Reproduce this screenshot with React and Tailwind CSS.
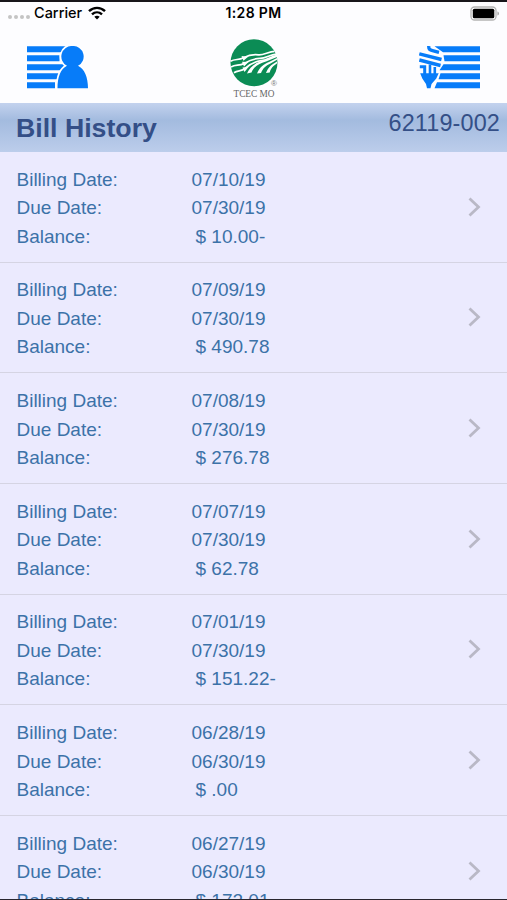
const bills = [
  { date: '07/10/19', due: '07/30/19', balance: '$ 10.00-' },
  { date: '07/09/19', due: '07/30/19', balance: '$ 490.78' },
  { date: '07/08/19', due: '07/30/19', balance: '$ 276.78' },
  { date: '07/07/19', due: '07/30/19', balance: '$ 62.78' },
  { date: '07/01/19', due: '07/30/19', balance: '$ 151.22-' },
  { date: '06/28/19', due: '06/30/19', balance: '$ .00' },
  { date: '06/27/19', due: '06/30/19', balance: '$ 172.01' },
];

function WifiIcon() {
  return (
    <svg width="18" height="14" viewBox="0 0 18 14" fill="none" stroke="#000" strokeWidth="2.4">
      <path d="M1 5.2C5.6.7 12.4.7 17 5.2" />
      <path d="M4 8.4c2.9-2.7 7.1-2.7 10 0" />
      <path d="M9 13.5 6.3 10.8c1.6-1.4 3.8-1.4 5.4 0z" fill="#000" stroke="none" />
    </svg>
  );
}

function StatusBar() {
  return (
    <div className="flex h-6 items-center border-t-2 border-[#18161a] px-2 text-black">
      <div className="flex flex-1 items-center">
        <div className="flex gap-[2px] pt-[7px]">
          {[0, 1, 2, 3].map((dot) => (
            <span key={dot} className="size-[4px] rounded-full bg-[#c4c4c4]" />
          ))}
        </div>
        <span className="ml-[4px] mr-[6px] font-[Inter] text-[14.5px] font-medium">Carrier</span>
        <WifiIcon />
      </div>
      <span className="-mt-px font-[Inter] text-[14px] font-semibold tracking-[0.35px]">1:28 PM</span>
      <div className="flex flex-1 items-center justify-end">
        <svg width="29" height="15" viewBox="0 0 29 15">
          <rect x="1" y="1" width="25" height="13" rx="3.500" fill="#fff" stroke="#b4b4b4" strokeWidth="1.300" />
          <rect x="2.800" y="2.700" width="21.500" height="9.600" rx="1.600" fill="#000" />
          <path d="M27.500 5.400c1.800.5 1.800 3.700 0 4.200z" fill="#999" />
        </svg>
      </div>
    </div>
  );
}

function AccountIcon() {
  return (
    <svg width="62" height="43" viewBox="0 0 62 43" fill="#077cf9">
      <path d="M0 .3h40v6H0zM0 9.300h32.500v6H0zM0 18.300h38v6H0zM0 27.300h32v6H0zM0 36.300h28v6H0z" />
      <path
        d="M45.500 0a10.500 10.500 0 0 1 5.500 19.800C57.500 23 61 31 61 42.300H30.500c0-11.300 3-19.300 9.500-22.500A10.500 10.500 0 0 1 45.500 0z"
        stroke="#fff"
        strokeWidth="3.400"
        paintOrder="stroke"
      />
    </svg>
  );
}

function UsageIcon() {
  return (
    <svg width="62" height="43" viewBox="0 0 62 43" fill="#077cf9">
      <path d="M15.500.3H61v6H24zM24.500 9.300H61v6H25.500zM24.500 18.300H61v6H20.500zM21.500 27.300H61v6H19.500zM18 36.300h43v6H15.500z" />
      <g fill="none" stroke="#077cf9" strokeWidth="3.400">
        <path d="M9.800 0c-.3 3 .8 4 3.700 4.700l6.500 1.700" />
        <path d="M.3 7.800 22.500 13.500" />
        <path d="M.3 14 21.500 19.500" />
        <path d="M.8 20.800h4.900V29" strokeWidth="3" />
        <path d="M11 18.500V29M15.800 21V29" strokeWidth="2.600" />
      </g>
      <path d="M1.200 27.300h18.500l-2.400 5.200-4.800 5.500-1 4.300H8L7 38l-3.700-5.500z" />
    </svg>
  );
}

function Logo() {
  return (
    <svg width="48" height="48" viewBox="0 0 48 48">
      <circle cx="24" cy="23.800" r="23.500" fill="#0b8c55" />
      <g fill="#fff">
        {/* furrows sweeping up to the right */}
        <path d="M17 34.500c3-8 11-12 18-13.500l12-4.500v1.600L36 22.500c-7 2-12 5-14.500 11z" />
        <path d="M27 34.500c3-7 7-9.500 12-11.500l8-4v1.700l-7 4c-4 2-7 4-9 9.300z" />
        <path d="M36 34c2-5 4-7 7-9l4-2.600.2 1.800-3.700 2.900c-1.800 1.500-2.900 3.400-3.800 6.400z" />
      </g>
      <g fill="none" stroke="#fff" strokeWidth="1.700">
        <path d="M.5 22.300c5-2.800 8-.8 13-3.600 6-3 10-3.500 15-2.800 5 .5 10-3.200 16-3.500" />
        <path d="M1 28c5-2.800 8-.8 13-3.600 6-3.400 11-5 16-5 6 0 10-3.800 16-4.300" />
        <path d="M4 33.800c4-2.800 7-1 11-4.300 5-4.500 10-7 16-7.800 6-.7 10-4.200 16-5" />
      </g>
      <g fill="#fff">
        <path d="m11.500 17 6.500.7-4.500 4zM12 22.800l6.500.3-4.500 4.300zM12.500 28.500l6-.5-4 5z" />
      </g>
    </svg>
  );
}

function Header() {
  return (
    <header className="flex h-[79px] justify-between bg-[#fdfdff] px-[27px]">
      <div className="pt-[22px]">
        <AccountIcon />
      </div>
      <div className="relative flex flex-col items-center pt-[15px]">
        <Logo />
        <span className="absolute right-[1px] top-[54px] font-['Liberation_Sans'] text-[8px] text-[#777]">®</span>
        <p className="text-center font-['Liberation_Serif'] text-[9.300px] leading-[14px] text-[#666]">TCEC MO</p>
      </div>
      <div className="-mr-px pt-[22px]">
        <UsageIcon />
      </div>
    </header>
  );
}

function BillRow({ bill }) {
  return (
    <li className="flex h-[110.650px] items-center border-b border-[#d5d4e3] pl-[16.500px] pr-[26px]">
      <dl className="grid flex-1 grid-cols-[175px_1fr] pt-[3.500px] text-[19px] leading-[28.500px] text-[#3c72a8]">
        <dt>Billing Date:</dt>
        <dd>{bill.date}</dd>
        <dt>Due Date:</dt>
        <dd>{bill.due}</dd>
        <dt>Balance:</dt>
        <dd className="pl-[4px]">{bill.balance}</dd>
      </dl>
      <svg width="13" height="20" viewBox="0 0 13 20" fill="none" stroke="#b9b8c6" strokeWidth="2.800">
        <path d="M1.500 1.500 10.500 10l-9 8.500" />
      </svg>
    </li>
  );
}

export default function App() {
  return (
    <div className="relative flex h-[900px] w-[507px] flex-col overflow-hidden bg-[#ebeafe] font-['Liberation_Sans',sans-serif]">
      <div className="shrink-0 bg-[#fdfdff]">
        <StatusBar />
        <Header />
      </div>
      <div className="flex h-[49px] shrink-0 items-start justify-between bg-linear-to-b from-[#c3d2ee] via-[#a3bbdf] via-35% to-[#bccdeb] pl-[16px] pr-[7px] text-[#344f87]">
        <h1 className="pt-[5px] text-[26.700px] font-bold leading-[40px]">Bill History</h1>
        <span className="text-[23.400px] leading-[41px] tracking-[0.150px]">62119-002</span>
      </div>
      <ul className="shrink-0">
        {bills.map((bill) => (
          <BillRow key={bill.date} bill={bill} />
        ))}
      </ul>
      <div className="absolute inset-x-0 bottom-0 h-px bg-[#28262e]" />
    </div>
  );
}
